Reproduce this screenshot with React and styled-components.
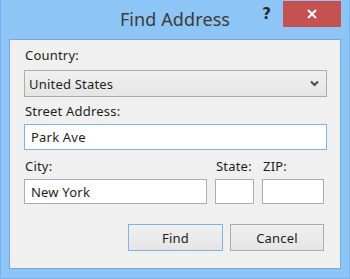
import React from "react";
import styled, { createGlobalStyle } from "styled-components";

const Global = createGlobalStyle`
  html, body { margin: 0; padding: 0; background: #8ec5f7; }
  body { font-family: "Noto Sans", "Open Sans", Arial, sans-serif; }
  * { box-sizing: border-box; }
`;

const Window = styled.div`
  width: 350px;
  height: 279px;
  background: #8ec5f7;
  border: 1px solid #79b3e8;
  border-top: none;
  display: flex;
  flex-direction: column;
`;

const TitleBar = styled.div`
  height: 39px;
  flex: none;
  display: grid;
  grid-template-columns: 1fr auto 1fr;
  align-items: start;
`;

const Title = styled.div`
  grid-column: 2;
  font-size: 18px;
  color: #3b3b3b;
  line-height: 24px;
  padding-top: 7px;
  letter-spacing: 0.1px;
`;

const Controls = styled.div`
  grid-column: 3;
  display: flex;
  justify-content: flex-end;
  align-items: flex-start;
  padding-right: 8px;
`;

const Help = styled.div`
  font-family: "DejaVu Sans", sans-serif;
  font-weight: bold;
  font-size: 15px;
  color: #2a2a2a;
  line-height: 16px;
  margin-top: 6px;
  margin-right: 12px;
`;

const Close = styled.div`
  width: 58px;
  height: 26px;
  margin-top: 1px;
  background: #c75050;
  display: flex;
  align-items: center;
  justify-content: center;
`;

const Panel = styled.div`
  margin: 0 8px 9px 8px;
  flex: 1;
  background: #f0f0f0;
  border: 1px solid #76a9dc;
  padding: 7px 13px 0 14px;
  display: flex;
  flex-direction: column;
`;

const Label = styled.div`
  font-size: 13px;
  letter-spacing: 0.2px;
  line-height: 17px;
  color: #1e1e1e;
  margin-top: ${(p) => p.$mt || 0}px;
  margin-left: 1px;
  white-space: nowrap;
`;

const Combo = styled.div`
  height: 27px;
  margin-top: 6px;
  border: 1px solid #acacac;
  background: linear-gradient(#f0f0f0, #e5e5e5);
  display: flex;
  align-items: center;
  justify-content: space-between;
  padding: 0 7px 0 4px;
  font-size: 13px;
  letter-spacing: 0.2px;
  color: #1e1e1e;
`;

const Input = styled.div`
  height: ${(p) => p.$h || 26}px;
  margin-top: 4px;
  border: 1px solid ${(p) => (p.$focused ? "#7eb4ea" : "#abadb3")};
  background: #ffffff;
  display: flex;
  align-items: center;
  padding-left: 6px;
  font-size: 13px;
  letter-spacing: 0.2px;
  color: #1e1e1e;
`;

const Row = styled.div`
  display: grid;
  grid-template-columns: 183px 39px 62px;
  column-gap: 8px;
  margin-top: 8px;
`;

const Cell = styled.div`
  display: flex;
  flex-direction: column;
`;

const Buttons = styled.div`
  display: flex;
  justify-content: flex-end;
  gap: 7px;
  margin-top: 20px;
  margin-right: 3px;
`;

const Button = styled.div`
  width: ${(p) => p.$w}px;
  height: 27px;
  border: 1px solid ${(p) => (p.$default ? "#7eb4ea" : "#acacac")};
  background: linear-gradient(#f0f0f0, #e5e5e5);
  display: flex;
  align-items: center;
  justify-content: center;
  font-size: 13px;
  letter-spacing: 0.2px;
  color: #1e1e1e;
`;

export default function App() {
  return (
    <>
      <Global />
      <Window>
        <TitleBar>
          <Title>Find Address</Title>
          <Controls>
            <Help>?</Help>
            <Close>
              <svg width="10" height="10" viewBox="0 0 10 10">
                <path d="M1 1 L9 9 M9 1 L1 9" stroke="#ffffff" strokeWidth="2" />
              </svg>
            </Close>
          </Controls>
        </TitleBar>
        <Panel>
          <Label>Country:</Label>
          <Combo>
            <span>United States</span>
            <svg width="9" height="7" viewBox="0 0 9 7">
              <path d="M1 1.5 L4.5 5 L8 1.5" stroke="#4a4a4a" strokeWidth="2" fill="none" />
            </svg>
          </Combo>
          <Label $mt={6}>Street Address:</Label>
          <Input $focused>Park Ave</Input>
          <Row>
            <Cell>
              <Label>City:</Label>
              <Input $h={25}>New York</Input>
            </Cell>
            <Cell>
              <Label>State:</Label>
              <Input $h={25} />
            </Cell>
            <Cell>
              <Label>ZIP:</Label>
              <Input $h={25} />
            </Cell>
          </Row>
          <Buttons>
            <Button $w={95} $default>Find</Button>
            <Button $w={94}>Cancel</Button>
          </Buttons>
        </Panel>
      </Window>
    </>
  );
}
